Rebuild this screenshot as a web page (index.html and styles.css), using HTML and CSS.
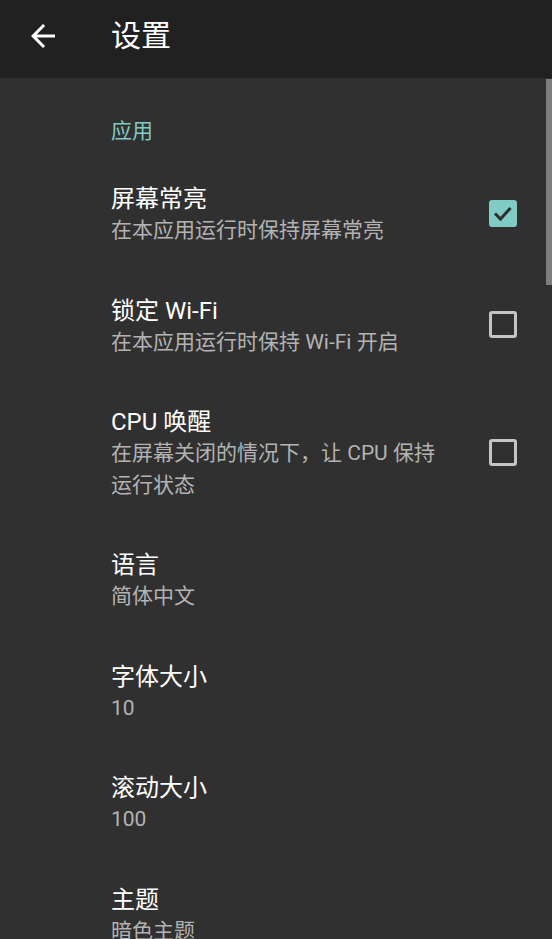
FILE: index.html
```html
<!DOCTYPE html>
<html lang="zh-CN">
<head>
<meta charset="utf-8">
<title>设置</title>
<link rel="stylesheet" href="styles.css">
</head>
<body>
<div class="app">
  <header class="toolbar">
    <button class="back" aria-label="返回">
      <svg viewBox="0 0 24 24" width="36" height="36"><path d="M20 11H7.83l5.59-5.59L12 4l-8 8 8 8 1.41-1.41L7.83 13H20v-2z" fill="#ffffff"/></svg>
    </button>
    <h1 class="title">设置</h1>
  </header>
  <main class="content">
    <div class="scrollbar"></div>
    <div class="category">应用</div>
    <div class="pref">
      <div class="text">
        <div class="pref-title">屏幕常亮</div>
        <div class="pref-sub">在本应用运行时保持屏幕常亮</div>
      </div>
      <div class="checkbox checked">
        <svg viewBox="0 0 28 27" width="28" height="27"><polyline points="6,13.5 11.5,19 21.5,8" fill="none" stroke="#2e2e2e" stroke-width="3"/></svg>
      </div>
    </div>
    <div class="pref">
      <div class="text">
        <div class="pref-title">锁定 Wi-Fi</div>
        <div class="pref-sub">在本应用运行时保持 Wi-Fi 开启</div>
      </div>
      <div class="checkbox"></div>
    </div>
    <div class="pref">
      <div class="text">
        <div class="pref-title">CPU 唤醒</div>
        <div class="pref-sub">在屏幕关闭的情况下，让 CPU 保持运行状态</div>
      </div>
      <div class="checkbox"></div>
    </div>
    <div class="pref">
      <div class="text">
        <div class="pref-title">语言</div>
        <div class="pref-sub">简体中文</div>
      </div>
    </div>
    <div class="pref">
      <div class="text">
        <div class="pref-title">字体大小</div>
        <div class="pref-sub">10</div>
      </div>
    </div>
    <div class="pref">
      <div class="text">
        <div class="pref-title">滚动大小</div>
        <div class="pref-sub">100</div>
      </div>
    </div>
    <div class="pref">
      <div class="text">
        <div class="pref-title">主题</div>
        <div class="pref-sub">暗色主题</div>
      </div>
    </div>
  </main>
</div>
</body>
</html>
```

FILE: styles.css
```css
* { box-sizing: border-box; }
html, body {
  margin: 0;
  padding: 0;
  height: 100%;
  background: #303030;
  overflow: hidden;
}
body {
  font-family: Roboto, "Noto Sans CJK SC", "Noto Sans", sans-serif;
  color: #ffffff;
}
.app {
  width: 552px;
  height: 939px;
  display: flex;
  flex-direction: column;
  overflow: hidden;
}
.toolbar {
  height: 78px;
  flex: 0 0 78px;
  background: #212121;
  display: flex;
  align-items: center;
  padding: 0 0 6px 25px;
}
.back {
  width: 36px;
  height: 36px;
  padding: 0;
  border: 0;
  background: transparent;
  display: flex;
}
.title {
  margin: 0 0 0 50px;
  font-size: 30px;
  font-weight: 400;
  line-height: 36px;
  color: #ffffff;
}
.content {
  position: relative;
  flex: 1;
  padding: 37px 35px 0 111px;
}
.scrollbar {
  position: absolute;
  right: 0;
  top: 1px;
  width: 6px;
  height: 206px;
  background: #7e7e7e;
}
.category {
  font-size: 21px;
  line-height: 32px;
  color: #80cbc4;
  margin-bottom: 12px;
}
.pref {
  display: flex;
  align-items: center;
  padding: 24px 0;
  gap: 40px;
}
.text {
  flex: 1;
  min-width: 0;
}
.pref-title {
  font-size: 24px;
  line-height: 32px;
  color: #ffffff;
}
.pref-sub {
  font-size: 21px;
  line-height: 31.5px;
  color: #b3b3b3;
}
.checkbox {
  flex: 0 0 28px;
  width: 28px;
  height: 27px;
  border: 3px solid #c4c4c4;
  border-radius: 3px;
  margin-top: -3px;
}
.checkbox.checked {
  border: 0;
  background: #80cbc4;
  display: flex;
}
```
